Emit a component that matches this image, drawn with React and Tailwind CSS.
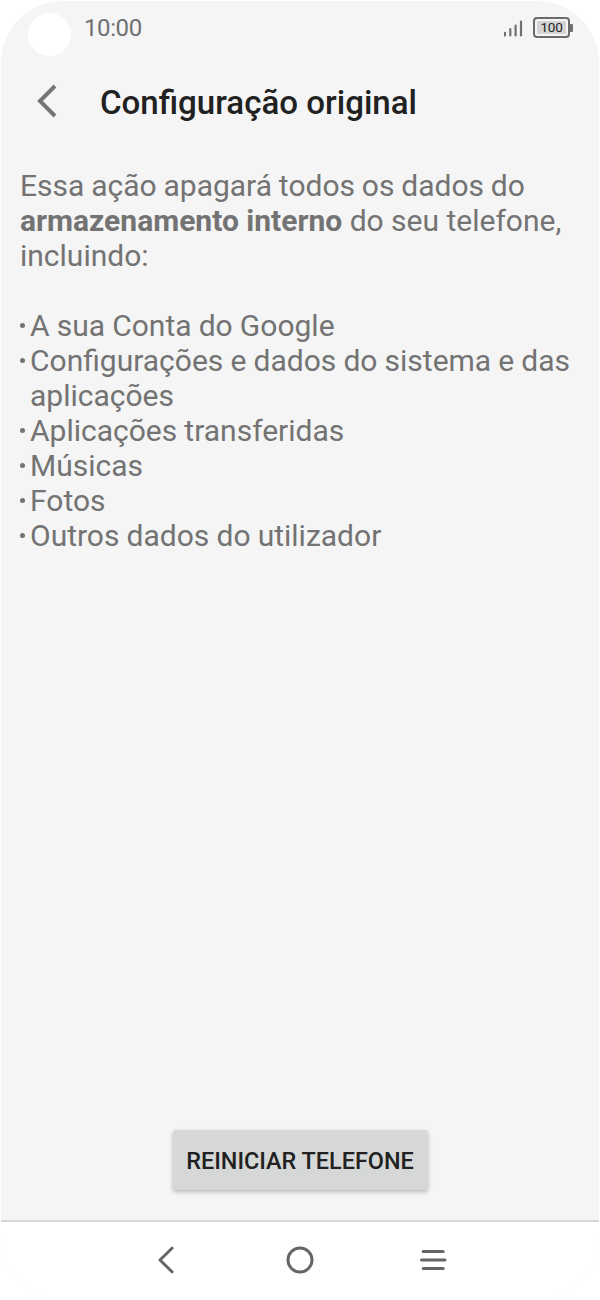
const items = [
  ["A sua Conta do Google"],
  ["Configurações e dados do sistema e das", "aplicações"],
  ["Aplicações transferidas"],
  ["Músicas"],
  ["Fotos"],
  ["Outros dados do utilizador"],
];

function StatusBar() {
  return (
    <div className="flex h-[58px] shrink-0 items-start pl-[27px] pr-[26px]">
      <div className="mt-[12px] size-[43px] rounded-full bg-white" />
      <span className="ml-[13px] mt-[13px] text-[24px] leading-[28px] tracking-[-0.4px] text-[#707070]">10:00</span>
      <svg className="ml-auto mt-[18px]" width="20" height="18" viewBox="0 0 20 18" fill="none" stroke="#707070" strokeWidth="2.2" strokeLinecap="round">
        <path d="M1 13.8V16.4M6.3 10.2V16.4M11.6 6.7V16.4M17 2.7V16.4" />
      </svg>
      <div className="ml-[9px] mt-[16px] flex items-center">
        <div className="flex h-[21px] w-[37px] rounded-[4px] border-2 border-[#6b6b6b] p-[2px]">
          <div className="flex flex-1 items-center justify-center rounded-[1px] bg-[#d4d4d4] text-[13.5px] leading-none tracking-[-0.3px] text-[#222]">100</div>
        </div>
        <div className="h-[8px] w-[3px] rounded-r-[1px] bg-[#707070]" />
      </div>
    </div>
  );
}

export default function App() {
  return (
    <div className="h-[1300px] w-[600px] overflow-hidden bg-white px-px pt-px font-['Roboto',sans-serif]">
      <div className="flex h-[1298px] flex-col overflow-hidden rounded-[62px] bg-[#f5f5f5]">
        <StatusBar />
        <header className="flex h-[88px] shrink-0 items-center pl-[34px]">
          <svg className="-mt-[4px]" width="24" height="36" viewBox="0 0 24 36" fill="none" stroke="#757575" strokeWidth="4">
            <path d="M20 3L5 18L20 33" />
          </svg>
          <h1 className="ml-[41px] whitespace-nowrap text-[33.1px] font-medium leading-[40px] text-[#212121]">Configuração original</h1>
        </header>
        <main className="flex flex-1 flex-col whitespace-nowrap pl-[19px] pt-[20.5px] text-[30px] leading-[35px] text-[#737373]">
          <p>
            <span className="[word-spacing:-0.6px]">Essa ação apagará todos os dados do</span><br />
            <b className="font-bold">armazenamento interno</b> do seu telefone,<br />
            incluindo:
          </p>
          <ul className="mt-[35px] [word-spacing:-0.3px]">
            {items.map((lines) => (
              <li key={lines[0]} className="flex">
                <span className="mt-[15.5px] size-[4.5px] shrink-0 rounded-full bg-[#737373]" />
                <span className="ml-[5.5px]">
                  {lines.map((line) => (
                    <span key={line} className="block">{line}</span>
                  ))}
                </span>
              </li>
            ))}
          </ul>
        </main>
        <div className="flex shrink-0 justify-center pb-[30px]">
          <button className="h-[60px] w-[255px] whitespace-nowrap rounded-[3px] bg-[#d6d8d7] pt-[3px] text-[23.4px] font-medium text-[#212121] shadow-[0_2px_4px_rgba(0,0,0,0.25)]">REINICIAR TELEFONE</button>
        </div>
        <nav className="flex h-[79px] shrink-0 border-t-2 border-[#d8d8d8] bg-white pl-[155px] pt-[24px]">
          <svg width="20" height="30" viewBox="0 0 20 30" fill="none" stroke="#666" strokeWidth="3" strokeLinecap="round">
            <path d="M16 2.2L4 14L16 25.8" strokeLinejoin="round" />
          </svg>
          <svg className="ml-[109px]" width="30" height="30" viewBox="0 0 30 30" fill="none" stroke="#666" strokeWidth="3">
            <circle cx="15" cy="14" r="12" />
          </svg>
          <svg className="ml-[103px]" width="30" height="30" viewBox="0 0 30 30" fill="none" stroke="#666" strokeWidth="3" strokeLinecap="round">
            <path d="M5.2 5.6H25.2M3.5 14H27M5.2 22.4H25.2" />
          </svg>
        </nav>
      </div>
    </div>
  );
}
